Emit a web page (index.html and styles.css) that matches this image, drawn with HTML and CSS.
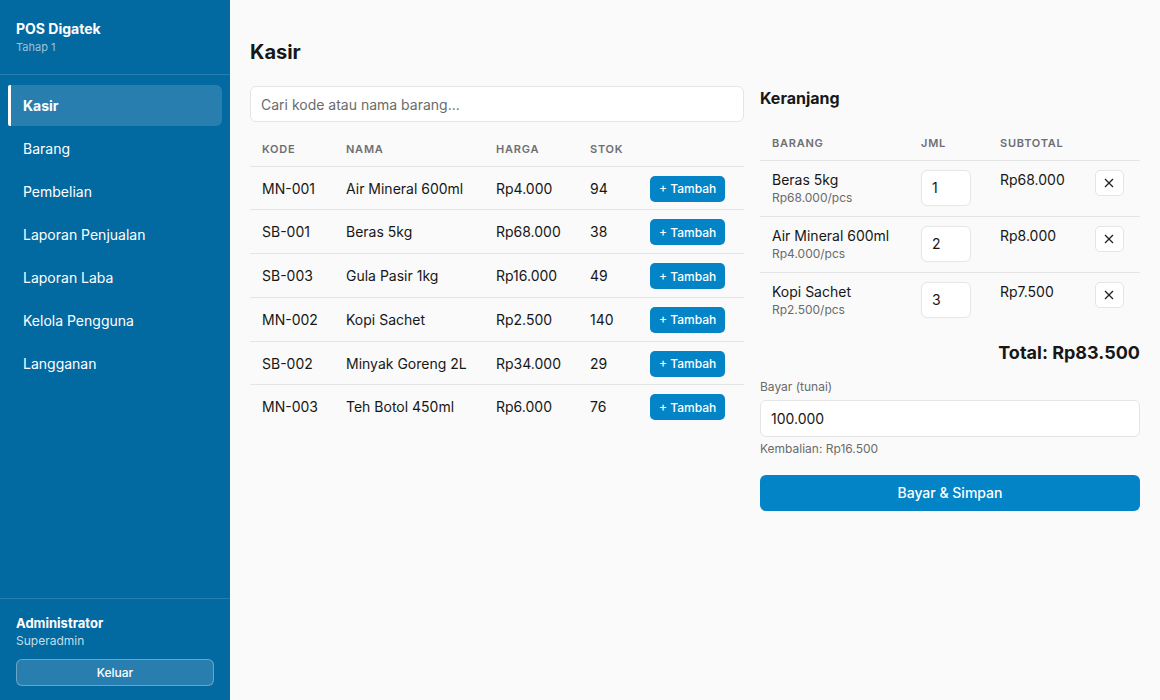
FILE: index.html
```html
<!DOCTYPE html>
<html lang="id">
<head>
<meta charset="utf-8">
<title>Kasir - POS Digatek</title>
<link rel="stylesheet" href="styles.css">
</head>
<body>
<div class="app">
  <aside class="sidebar">
    <div class="brand">
      <div class="brand-name">POS Digatek</div>
      <div class="brand-sub">Tahap 1</div>
    </div>
    <nav class="nav">
      <a class="nav-item active">Kasir</a>
      <a class="nav-item">Barang</a>
      <a class="nav-item">Pembelian</a>
      <a class="nav-item">Laporan Penjualan</a>
      <a class="nav-item">Laporan Laba</a>
      <a class="nav-item">Kelola Pengguna</a>
      <a class="nav-item">Langganan</a>
    </nav>
    <div class="user">
      <div class="user-name">Administrator</div>
      <div class="user-role">Superadmin</div>
      <button class="logout">Keluar</button>
    </div>
  </aside>

  <main class="main">
    <h1 class="page-title">Kasir</h1>
    <div class="pos">
      <section class="products">
        <input class="search" type="text" placeholder="Cari kode atau nama barang...">
        <table class="table product-table">
          <thead>
            <tr><th class="c-kode">Kode</th><th class="c-nama">Nama</th><th class="c-harga">Harga</th><th class="c-stok">Stok</th><th></th></tr>
          </thead>
          <tbody>
            <tr><td>MN-001</td><td>Air Mineral 600ml</td><td>Rp4.000</td><td>94</td><td><button class="btn-add">+ Tambah</button></td></tr>
            <tr><td>SB-001</td><td>Beras 5kg</td><td>Rp68.000</td><td>38</td><td><button class="btn-add">+ Tambah</button></td></tr>
            <tr><td>SB-003</td><td>Gula Pasir 1kg</td><td>Rp16.000</td><td>49</td><td><button class="btn-add">+ Tambah</button></td></tr>
            <tr><td>MN-002</td><td>Kopi Sachet</td><td>Rp2.500</td><td>140</td><td><button class="btn-add">+ Tambah</button></td></tr>
            <tr><td>SB-002</td><td>Minyak Goreng 2L</td><td>Rp34.000</td><td>29</td><td><button class="btn-add">+ Tambah</button></td></tr>
            <tr><td>MN-003</td><td>Teh Botol 450ml</td><td>Rp6.000</td><td>76</td><td><button class="btn-add">+ Tambah</button></td></tr>
          </tbody>
        </table>
      </section>

      <section class="cart">
        <h2 class="cart-title">Keranjang</h2>
        <table class="table cart-table">
          <thead>
            <tr><th class="c-barang">Barang</th><th class="c-jml">Jml</th><th class="c-sub">Subtotal</th><th></th></tr>
          </thead>
          <tbody>
            <tr>
              <td><div class="item-name">Beras 5kg</div><div class="item-price">Rp68.000/pcs</div></td>
              <td><input class="qty" type="text" value="1"></td>
              <td class="subtotal">Rp68.000</td>
              <td><button class="btn-remove" aria-label="Hapus"><svg viewBox="0 0 10 10" width="10" height="10"><path d="M1 1L9 9M9 1L1 9"/></svg></button></td>
            </tr>
            <tr>
              <td><div class="item-name">Air Mineral 600ml</div><div class="item-price">Rp4.000/pcs</div></td>
              <td><input class="qty" type="text" value="2"></td>
              <td class="subtotal">Rp8.000</td>
              <td><button class="btn-remove" aria-label="Hapus"><svg viewBox="0 0 10 10" width="10" height="10"><path d="M1 1L9 9M9 1L1 9"/></svg></button></td>
            </tr>
            <tr>
              <td><div class="item-name">Kopi Sachet</div><div class="item-price">Rp2.500/pcs</div></td>
              <td><input class="qty" type="text" value="3"></td>
              <td class="subtotal">Rp7.500</td>
              <td><button class="btn-remove" aria-label="Hapus"><svg viewBox="0 0 10 10" width="10" height="10"><path d="M1 1L9 9M9 1L1 9"/></svg></button></td>
            </tr>
          </tbody>
        </table>
        <div class="total">Total: Rp83.500</div>
        <label class="pay-label">Bayar (tunai)</label>
        <input class="pay-input" type="text" value="100.000">
        <div class="change">Kembalian: Rp16.500</div>
        <button class="btn-pay">Bayar &amp; Simpan</button>
      </section>
    </div>
  </main>
</div>
</body>
</html>
```

FILE: styles.css
```css
* { box-sizing: border-box; }

html, body {
  margin: 0;
  height: 100%;
}

body {
  font-family: Inter, "Noto Sans", sans-serif;
  color: #171717;
  background: #fafafa;
  font-size: 14px;
}

.app {
  display: flex;
  height: 700px;
}

/* Sidebar */
.sidebar {
  width: 230px;
  flex: none;
  background: #0369a1;
  color: #fff;
  display: flex;
  flex-direction: column;
}

.brand {
  padding: 20px 16px 20px;
  border-bottom: 1px solid rgba(255, 255, 255, 0.15);
}

.brand-name {
  font-size: 14px;
  font-weight: 700;
  line-height: 18px;
}

.brand-sub {
  font-size: 11px;
  line-height: 14px;
  margin-top: 2px;
  color: rgba(255, 255, 255, 0.6);
}

.nav {
  flex: 1;
  padding: 10px 8px;
  display: flex;
  flex-direction: column;
  gap: 2px;
}

.nav-item {
  display: block;
  height: 41px;
  line-height: 41px;
  padding-left: 15px;
  border-radius: 6px;
  font-size: 14px;
  color: #fff;
}

.nav-item.active {
  background: rgba(255, 255, 255, 0.15);
  border-left: 3px solid #fff;
  border-radius: 2px 6px 6px 2px;
  padding-left: 12px;
  font-weight: 700;
}

.user {
  border-top: 1px solid rgba(255, 255, 255, 0.15);
  padding: 16px 16px 14px;
}

.user-name {
  font-size: 13px;
  font-weight: 700;
  line-height: 16px;
}

.user-role {
  font-size: 12px;
  line-height: 16px;
  margin-top: 2px;
  color: rgba(255, 255, 255, 0.78);
}

.logout {
  display: block;
  width: 100%;
  height: 27px;
  margin-top: 10px;
  background: rgba(255, 255, 255, 0.15);
  border: 1px solid rgba(255, 255, 255, 0.3);
  border-radius: 6px;
  color: #fff;
  font-family: inherit;
  font-size: 12px;
  font-weight: 500;
}

/* Main */
.main {
  flex: 1;
  padding: 40px 20px 20px;
}

.page-title {
  margin: 0 0 22px;
  font-size: 20px;
  line-height: 24px;
  font-weight: 700;
}

.pos {
  display: grid;
  grid-template-columns: 1.3fr 1fr;
  gap: 16px;
  align-items: start;
}

.search {
  display: block;
  width: 100%;
  height: 36px;
  padding: 0 10px;
  border: 1px solid #e5e5e5;
  border-radius: 6px;
  background: #fff;
  font-family: inherit;
  font-size: 14px;
  color: #171717;
  margin-bottom: 10px;
}

.search::placeholder { color: #6b6b6b; }

.table {
  width: 100%;
  border-collapse: collapse;
}

.table th {
  text-align: left;
  font-size: 11px;
  font-weight: 600;
  letter-spacing: 0.07em;
  text-transform: uppercase;
  color: #6e6e73;
  height: 34px;
  padding: 0 12px;
  border-bottom: 1px solid #e5e5e5;
}

.table td {
  font-size: 14px;
  padding: 9px 12px 7.8px;
  border-bottom: 1px solid #e5e5e5;
  vertical-align: middle;
}

.product-table td { line-height: 16px; }

.table tbody tr:last-child td { border-bottom: none; }

.c-kode { width: 84px; }
.c-nama { width: 150px; }
.c-harga { width: 94px; }
.c-stok { width: 60px; }

.btn-add {
  height: 26px;
  padding: 0 9px;
  border: none;
  border-radius: 5px;
  background: #0284c7;
  color: #fff;
  font-family: inherit;
  font-size: 12px;
  font-weight: 500;
  white-space: nowrap;
  vertical-align: middle;
}

/* Cart */
.cart-title {
  margin: 0 0 16px;
  font-size: 16px;
  line-height: 24px;
  font-weight: 700;
}

.c-barang { width: 149px; }
.c-jml { width: 79px; }
.c-sub { width: 95px; }

.cart-table td {
  vertical-align: top;
  padding: 9px 12px 10px;
}

.item-name {
  font-size: 14px;
  line-height: 18px;
  margin-top: 1px;
}

.item-price {
  font-size: 12px;
  line-height: 16px;
  color: #6b6b6b;
  margin-top: 1px;
}

.subtotal { line-height: 18px; }
.cart-table td.subtotal { padding-top: 10px; }

.qty {
  display: block;
  width: 50px;
  height: 36px;
  padding: 0 10px;
  border: 1px solid #e5e5e5;
  border-radius: 6px;
  background: #fff;
  font-family: inherit;
  font-size: 14px;
  color: #171717;
}

.btn-remove {
  display: flex;
  align-items: center;
  justify-content: center;
  width: 29px;
  height: 26px;
  padding: 0;
  border: 1px solid #e5e5e5;
  border-radius: 5px;
  background: #fff;
}

.btn-remove svg {
  stroke: #222;
  stroke-width: 1.3;
  fill: none;
}

.total {
  margin-top: 14px;
  text-align: right;
  font-size: 18px;
  line-height: 22px;
  font-weight: 700;
}

.pay-label {
  display: block;
  margin-top: 15px;
  font-size: 12px;
  line-height: 16px;
  color: #6b6b6b;
}

.pay-input {
  display: block;
  width: 100%;
  height: 37px;
  margin-top: 5px;
  padding: 0 10px;
  border: 1px solid #e5e5e5;
  border-radius: 6px;
  background: #fff;
  font-family: inherit;
  font-size: 14px;
  color: #171717;
}

.change {
  margin-top: 4px;
  font-size: 12px;
  line-height: 16px;
  color: #6b6b6b;
}

.btn-pay {
  display: block;
  width: 100%;
  height: 36px;
  margin-top: 18px;
  border: none;
  border-radius: 6px;
  background: #0284c7;
  color: #fff;
  font-family: inherit;
  font-size: 14px;
  font-weight: 500;
}
```
